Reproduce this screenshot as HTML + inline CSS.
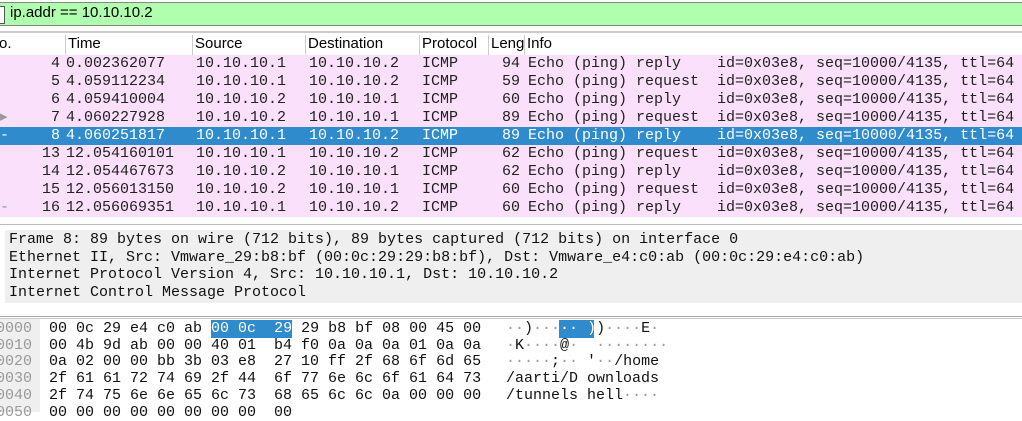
<!DOCTYPE html>
<html><head><style>
body{margin:0;width:1022px;height:412px;overflow:hidden;background:#fff;position:relative;font-family:"Liberation Mono",monospace;}
.abs{position:absolute;white-space:pre;}
#filter{left:0;top:2px;width:1022px;height:22px;background:#afffaf;border-top:1px solid #888;border-bottom:1px solid #888;}
#filter span{position:absolute;left:10px;top:1px;font:15px "Liberation Sans",sans-serif;color:#000;}
#filter i{position:absolute;left:0;top:3px;width:4px;height:16px;background:#fff;border:1px solid #555;border-left:none;}
#hdr{left:0;top:31px;width:1022px;height:22px;background:#fff;border-top:2px solid #ccc;border-bottom:1px solid #bbb;font:15px "Liberation Sans",sans-serif;}
#hdr div{position:absolute;top:2px;height:20px;border-left:1px solid #ccc;padding-left:2px;}
.row{position:absolute;left:0;width:1022px;height:18px;background:#fbe0fb;font-size:15px;line-height:18px;color:#222;}
.row.sel{background:#2f8bcb;color:#fff;}
.row span{position:absolute;top:0;white-space:pre;}
#det{left:5px;top:230px;width:1017px;height:73px;background:#efefef;font-size:15px;line-height:17.5px;color:#111;padding:1px 0 0 4px;box-sizing:border-box;}
.hex{font-size:15px;line-height:16.7px;color:#111;}
.off{color:#999;}
</style></head><body>
<div class="abs" id="filter"><i></i><span>ip.addr == 10.10.10.2</span></div>
<div class="abs" id="hdr">
<div style="left:-3px;border:none">o.</div>
<div style="left:65px">Time</div>
<div style="left:192px">Source</div>
<div style="left:305px">Destination</div>
<div style="left:419px">Protocol</div>
<div style="left:488px">Leng</div>
<div style="left:524px">Info</div>
</div>
<div class="row" style="top:55px"><span style="right:962px">4</span><span style="left:66px">0.002362077</span><span style="left:196px">10.10.10.1</span><span style="left:309px">10.10.10.2</span><span style="left:422px">ICMP</span><span style="left:502px">94</span><span style="left:528px">Echo (ping) reply    id=0x03e8, seq=10000/4135, ttl=64</span></div>
<div class="row" style="top:73px"><span style="right:962px">5</span><span style="left:66px">4.059112234</span><span style="left:196px">10.10.10.1</span><span style="left:309px">10.10.10.2</span><span style="left:422px">ICMP</span><span style="left:502px">59</span><span style="left:528px">Echo (ping) request  id=0x03e8, seq=10000/4135, ttl=64</span></div>
<div class="row" style="top:91px"><span style="right:962px">6</span><span style="left:66px">4.059410004</span><span style="left:196px">10.10.10.2</span><span style="left:309px">10.10.10.1</span><span style="left:422px">ICMP</span><span style="left:502px">60</span><span style="left:528px">Echo (ping) reply    id=0x03e8, seq=10000/4135, ttl=64</span></div>
<div class="row" style="top:109px"><span style="left:0;color:#999">▸</span><span style="right:962px">7</span><span style="left:66px">4.060227928</span><span style="left:196px">10.10.10.2</span><span style="left:309px">10.10.10.1</span><span style="left:422px">ICMP</span><span style="left:502px">89</span><span style="left:528px">Echo (ping) request  id=0x03e8, seq=10000/4135, ttl=64</span></div>
<div class="row sel" style="top:127px"><span style="left:0">-</span><span style="right:962px">8</span><span style="left:66px">4.060251817</span><span style="left:196px">10.10.10.1</span><span style="left:309px">10.10.10.2</span><span style="left:422px">ICMP</span><span style="left:502px">89</span><span style="left:528px">Echo (ping) reply    id=0x03e8, seq=10000/4135, ttl=64</span></div>
<div class="row" style="top:145px"><span style="right:962px">13</span><span style="left:66px">12.054160101</span><span style="left:196px">10.10.10.1</span><span style="left:309px">10.10.10.2</span><span style="left:422px">ICMP</span><span style="left:502px">62</span><span style="left:528px">Echo (ping) request  id=0x03e8, seq=10000/4135, ttl=64</span></div>
<div class="row" style="top:163px"><span style="right:962px">14</span><span style="left:66px">12.054467673</span><span style="left:196px">10.10.10.2</span><span style="left:309px">10.10.10.1</span><span style="left:422px">ICMP</span><span style="left:502px">62</span><span style="left:528px">Echo (ping) reply    id=0x03e8, seq=10000/4135, ttl=64</span></div>
<div class="row" style="top:181px"><span style="right:962px">15</span><span style="left:66px">12.056013150</span><span style="left:196px">10.10.10.2</span><span style="left:309px">10.10.10.1</span><span style="left:422px">ICMP</span><span style="left:502px">60</span><span style="left:528px">Echo (ping) request  id=0x03e8, seq=10000/4135, ttl=64</span></div>
<div class="row" style="top:199px"><span style="left:0;color:#999">-</span><span style="right:962px">16</span><span style="left:66px">12.056069351</span><span style="left:196px">10.10.10.1</span><span style="left:309px">10.10.10.2</span><span style="left:422px">ICMP</span><span style="left:502px">60</span><span style="left:528px">Echo (ping) reply    id=0x03e8, seq=10000/4135, ttl=64</span></div>
<div class="abs" style="left:0;top:224px;width:1022px;height:1px;background:#bbb"></div>
<div class="abs" id="det">Frame 8: 89 bytes on wire (712 bits), 89 bytes captured (712 bits) on interface 0
Ethernet II, Src: Vmware_29:b8:bf (00:0c:29:29:b8:bf), Dst: Vmware_e4:c0:ab (00:0c:29:e4:c0:ab)
Internet Protocol Version 4, Src: 10.10.10.1, Dst: 10.10.10.2
Internet Control Message Protocol</div>
<div class="abs" style="left:0;top:316px;width:1022px;height:1px;background:#aaa"></div>
<div class="abs" style="left:0;top:318px;width:1022px;height:1px;background:#ccc"></div>
<div class="abs" style="left:0;top:319px;width:40px;height:93px;background:#efefef"></div>
<div class="abs" style="left:211px;top:320px;width:81px;height:18px;background:#2f8bcb"></div>
<div class="abs" style="left:559px;top:320px;width:35px;height:18px;background:#2f8bcb"></div>
<div class="abs hex off" style="left:-4px;top:321px">0000
0010
0020
0030
0040
0050</div>
<div class="abs hex" style="left:49px;top:321px">00 0c 29 e4 c0 ab <span style="color:#fff">00 0c</span>  <span style="color:#fff">29</span> 29 b8 bf 08 00 45 00
00 4b 9d ab 00 00 40 01  b4 f0 0a 0a 0a 01 0a 0a
0a 02 00 00 bb 3b 03 e8  27 10 ff 2f 68 6f 6d 65
2f 61 61 72 74 69 2f 44  6f 77 6e 6c 6f 61 64 73
2f 74 75 6e 6e 65 6c 73  68 65 6c 6c 0a 00 00 00
00 00 00 00 00 00 00 00  00</div>
<div class="abs hex" style="left:506px;top:321px"><span style="color:#999">··</span>)<span style="color:#999">···</span><span style="color:#fff">·· )</span>)<span style="color:#999">····</span>E<span style="color:#999">·</span>
<span style="color:#999">·</span>K<span style="color:#999">····</span>@<span style="color:#999">·  ········</span>
<span style="color:#999">·····</span>;<span style="color:#999">··</span> '<span style="color:#999">··</span>/home
/aarti/D ownloads
/tunnels hell<span style="color:#999">····</span></div>
</body></html>
